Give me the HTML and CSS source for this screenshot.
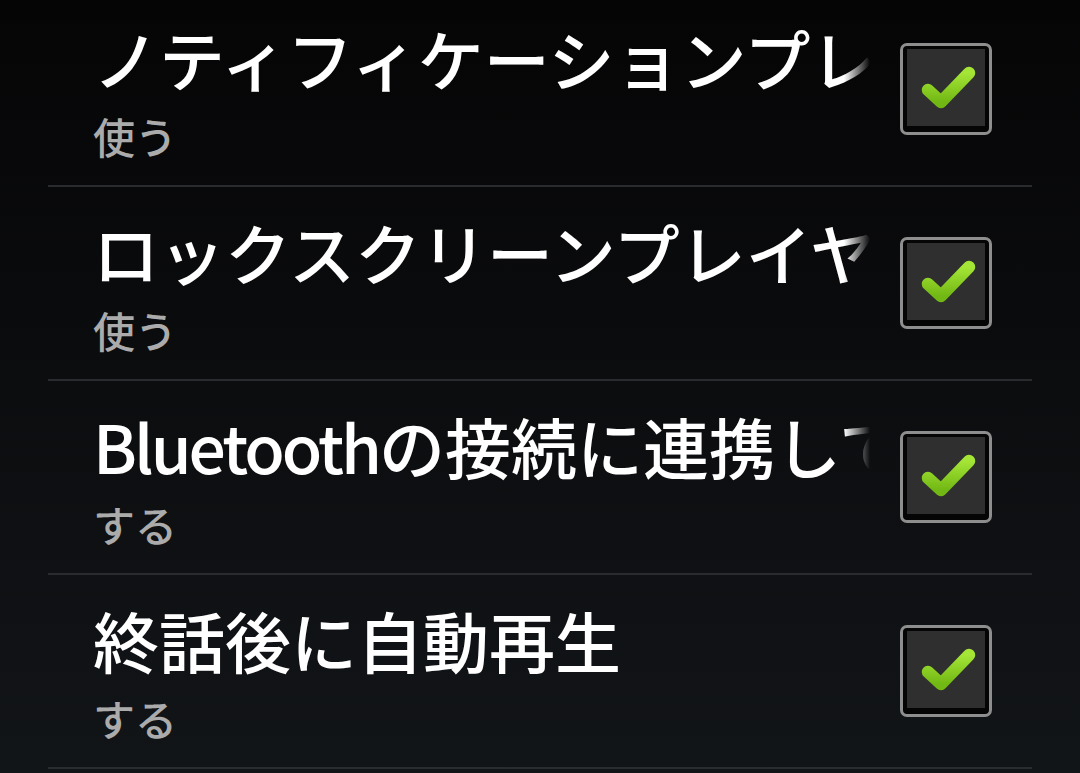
FILE: index.html
```html
<!DOCTYPE html>
<html lang="ja">
<head>
<meta charset="utf-8">
<link rel="stylesheet" href="styles.css">
</head>
<body>
<ul class="prefs">
  <li class="pref">
    <div class="pref-text">
      <div class="pref-title">ノティフィケーションプレイヤーを使う</div>
      <div class="pref-summary">使う</div>
    </div>
    <div class="check"><svg viewBox="0 0 92 92"><defs><linearGradient id="g1" x1="0" y1="0" x2="0" y2="1"><stop offset="0" stop-color="#a4e536"/><stop offset="1" stop-color="#72b814"/></linearGradient></defs><polyline points="28,47 41,59 69,30" fill="none" stroke="url(#g1)" stroke-width="12.5" stroke-linecap="round" stroke-linejoin="round"/></svg></div>
  </li>
  <li class="pref">
    <div class="pref-text">
      <div class="pref-title">ロックスクリーンプレイヤーを使う</div>
      <div class="pref-summary">使う</div>
    </div>
    <div class="check"><svg viewBox="0 0 92 92"><defs><linearGradient id="g2" x1="0" y1="0" x2="0" y2="1"><stop offset="0" stop-color="#a4e536"/><stop offset="1" stop-color="#72b814"/></linearGradient></defs><polyline points="28,47 41,59 69,30" fill="none" stroke="url(#g2)" stroke-width="12.5" stroke-linecap="round" stroke-linejoin="round"/></svg></div>
  </li>
  <li class="pref">
    <div class="pref-text">
      <div class="pref-title"><span class="latin">Bluetooth</span>の接続に連携して再生</div>
      <div class="pref-summary">する</div>
    </div>
    <div class="check"><svg viewBox="0 0 92 92"><defs><linearGradient id="g3" x1="0" y1="0" x2="0" y2="1"><stop offset="0" stop-color="#a4e536"/><stop offset="1" stop-color="#72b814"/></linearGradient></defs><polyline points="28,47 41,59 69,30" fill="none" stroke="url(#g3)" stroke-width="12.5" stroke-linecap="round" stroke-linejoin="round"/></svg></div>
  </li>
  <li class="pref">
    <div class="pref-text">
      <div class="pref-title">終話後に自動再生</div>
      <div class="pref-summary">する</div>
    </div>
    <div class="check"><svg viewBox="0 0 92 92"><defs><linearGradient id="g4" x1="0" y1="0" x2="0" y2="1"><stop offset="0" stop-color="#a4e536"/><stop offset="1" stop-color="#72b814"/></linearGradient></defs><polyline points="28,47 41,59 69,30" fill="none" stroke="url(#g4)" stroke-width="12.5" stroke-linecap="round" stroke-linejoin="round"/></svg></div>
  </li>
</ul>
</body>
</html>
```
FILE: styles.css
```css
html, body {
  margin: 0;
  padding: 0;
  height: 773px;
  overflow: hidden;
}
body {
  background: linear-gradient(to bottom, #050506 0%, #0b0c0e 45%, #121518 100%);
  font-family: "Noto Sans CJK JP", "Noto Sans", sans-serif;
  color: #ffffff;
}
.prefs {
  list-style: none;
  margin: -7px 48px 0 48px;
  padding: 0;
}
.pref {
  display: flex;
  align-items: center;
  height: 192px;
  border-bottom: 2px solid #2a2b2e;
  padding: 0 40px 0 45px;
}
.pref-text {
  width: 777px;
  flex: none;
}
.pref-title {
  font-size: 66px;
  font-weight: 500;
  line-height: 80px;
  white-space: nowrap;
  overflow: hidden;
  color: #ffffff;
  -webkit-mask-image: linear-gradient(to right, #000 calc(100% - 26px), transparent 100%);
  mask-image: linear-gradient(to right, #000 calc(100% - 26px), transparent 100%);
}
.latin {
  letter-spacing: -3px;
}
.pref-summary {
  font-size: 42px;
  font-weight: 500;
  line-height: 50px;
  margin-top: 14px;
  color: #ababab;
}
.check {
  margin-left: 30px;
  width: 86px;
  height: 86px;
  flex: none;
  border: 3px solid #8e8e8e;
  border-radius: 7px;
  background: #2f2f2f;
  box-shadow: inset 0 0 0 3px #050505, inset 0 -2px 0 4px #050505;
  display: flex;
}
.check svg {
  width: 92px;
  height: 92px;
  margin: -3px;
}
```
